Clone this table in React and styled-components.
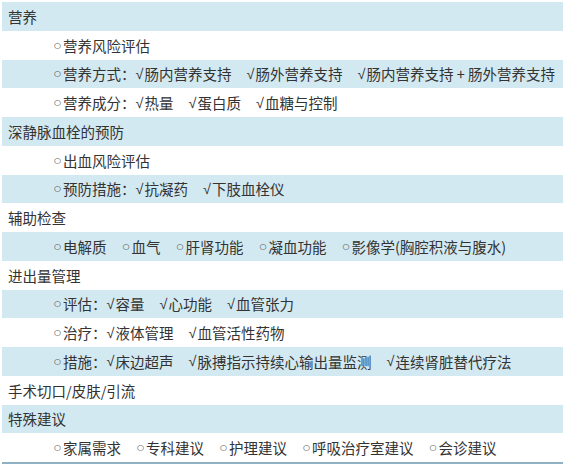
import React from "react";
import styled, { createGlobalStyle } from "styled-components";

const Global = createGlobalStyle`
  html, body { margin: 0; padding: 0; background: #ffffff; }
  body { font-family: "Noto Sans CJK SC", "Noto Sans", sans-serif; }
`;

const Table = styled.div`
  margin: 2px 0 0 2px;
  width: 561px;
  display: flex;
  flex-direction: column;
  border-bottom: 2px solid #8fb2c2;
`;

const Row = styled.div`
  height: 28.75px;
  display: flex;
  align-items: center;
  padding-left: ${(p) => (p.$sub ? "51px" : "6px")};
  background: ${(p) => (p.$shade ? "#d3e9f1" : "#ffffff")};
  color: #333333;
  font-size: 14.5px;
  white-space: nowrap;
  overflow: hidden;
`;

const Label = styled.span`
  display: inline-flex;
  align-items: center;
`;

const Bullet = styled.span`
  font-family: "DejaVu Sans", sans-serif;
  font-size: 8px;
  margin-right: 2px;
  margin-left: 1px;
`;

const Option = styled.span`
  display: inline-flex;
  align-items: center;
  margin-right: 15px;
  &:last-child { margin-right: 0; }
`;

const Check = styled.span`
  font-family: "Liberation Sans", sans-serif;
  margin-right: 1px;
`;

const rows = [
  { head: "营养" },
  { label: "营养风险评估" },
  { label: "营养方式：", opts: ["肠内营养支持", "肠外营养支持", "肠内营养支持 + 肠外营养支持"] },
  { label: "营养成分：", opts: ["热量", "蛋白质", "血糖与控制"] },
  { head: "深静脉血栓的预防" },
  { label: "出血风险评估" },
  { label: "预防措施：", opts: ["抗凝药", "下肢血栓仪"] },
  { head: "辅助检查" },
  { bullets: ["电解质", "血气", "肝肾功能", "凝血功能", "影像学(胸腔积液与腹水)"] },
  { head: "进出量管理" },
  { label: "评估：", opts: ["容量", "心功能", "血管张力"] },
  { label: "治疗：", opts: ["液体管理", "血管活性药物"] },
  { label: "措施：", opts: ["床边超声", "脉搏指示持续心输出量监测", "连续肾脏替代疗法"] },
  { head: "手术切口/皮肤/引流" },
  { head: "特殊建议" },
  { bullets: ["家属需求", "专科建议", "护理建议", "呼吸治疗室建议", "会诊建议"] },
];

export default function App() {
  return (
    <>
      <Global />
      <Table>
        {rows.map((r, i) => {
          const shade = i % 2 === 0;
          if (r.head) {
            return (
              <Row key={i} $shade={shade}>
                {r.head}
              </Row>
            );
          }
          if (r.bullets) {
            return (
              <Row key={i} $shade={shade} $sub>
                {r.bullets.map((b, j) => (
                  <Option key={j}>
                    <Bullet>○</Bullet>
                    {b}
                  </Option>
                ))}
              </Row>
            );
          }
          return (
            <Row key={i} $shade={shade} $sub>
              <Label>
                <Bullet>○</Bullet>
                {r.label}
              </Label>
              {r.opts &&
                r.opts.map((o, j) => (
                  <Option key={j}>
                    <Check>√</Check>
                    {o}
                  </Option>
                ))}
            </Row>
          );
        })}
      </Table>
    </>
  );
}
